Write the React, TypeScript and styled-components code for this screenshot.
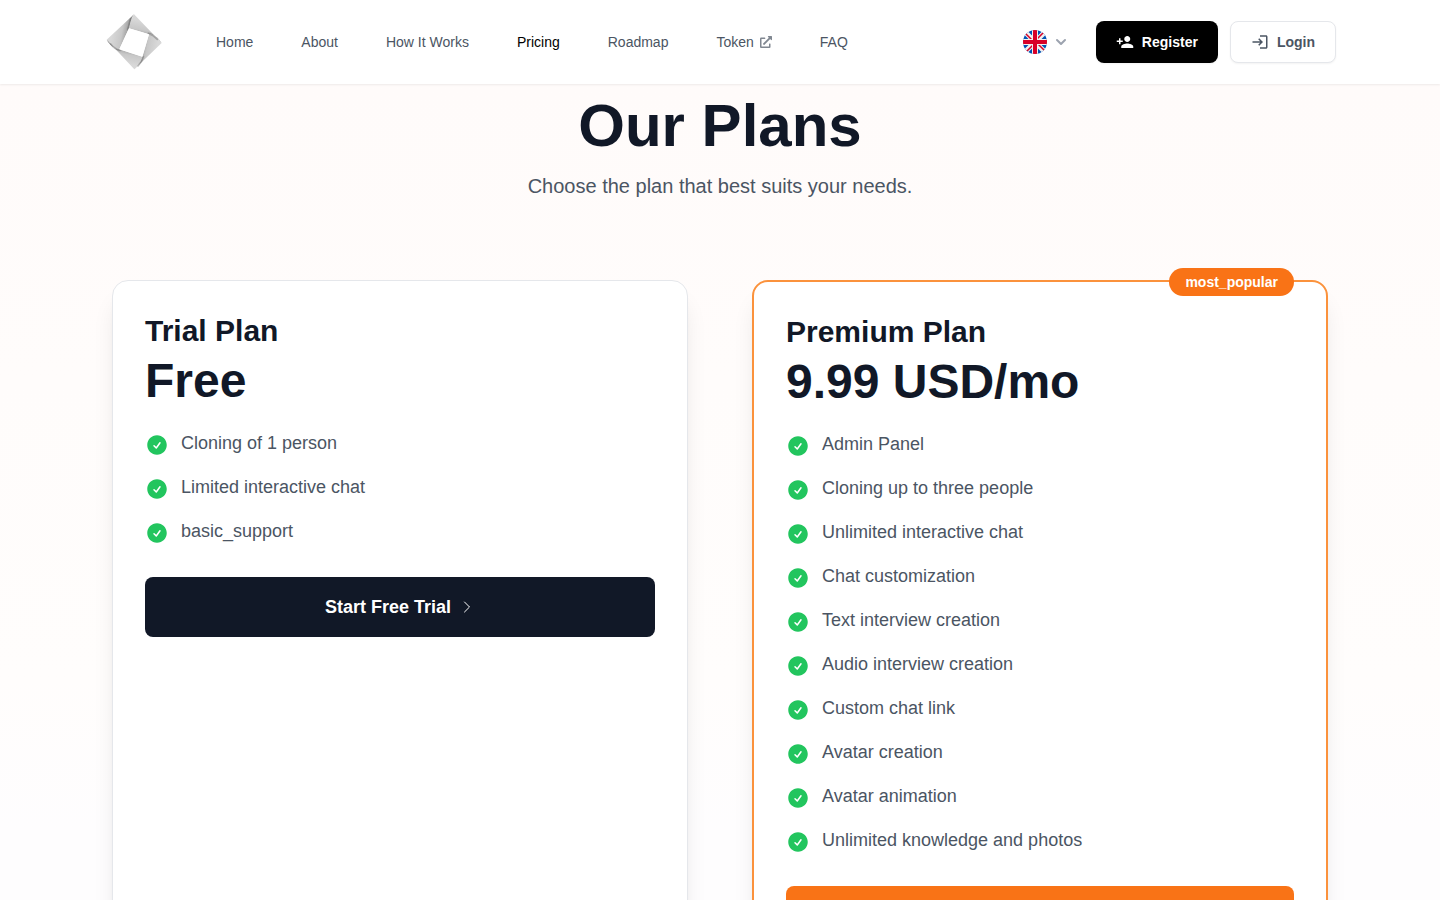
import React from "react";
import styled, { createGlobalStyle, css } from "styled-components";
import { MdLogin, MdPersonAdd } from "react-icons/md";
import { FaExternalLinkAlt } from "react-icons/fa";
import { HiCheckCircle, HiOutlineChevronRight } from "react-icons/hi2";
import { HiChevronDown } from "react-icons/hi";

const GlobalStyle = createGlobalStyle`
  *, *::before, *::after { box-sizing: border-box; }
  body {
    margin: 0;
    font-family: "Liberation Sans", Arial, sans-serif;
    font-size: 16px;
    line-height: 24px;
    color: #111827;
    background: #fff;
  }
  h1, h2, p, ul { margin: 0; padding: 0; }
  ul { list-style: none; }
  a { color: inherit; text-decoration: none; }
  button { font-family: inherit; cursor: pointer; }
  svg { display: block; flex-shrink: 0; }
`;

const Header = styled.header`
  position: sticky;
  top: 0;
  z-index: 10;
  background: #fff;
  box-shadow: 0 1px 2px rgba(0, 0, 0, 0.07);
`;

const HeaderInner = styled.div`
  display: flex;
  align-items: center;
  gap: 48px;
  max-width: 1280px;
  margin: 0 auto;
  padding: 10px 24px;
`;

const NavList = styled.ul`
  display: flex;
  align-items: center;
  gap: 48px;
`;

const NavLink = styled.a<{ $active?: boolean }>`
  display: flex;
  align-items: center;
  gap: 6px;
  font-size: 14px;
  line-height: 20px;
  color: ${(p) => (p.$active ? "#000" : "#4b5563")};
  svg { opacity: 0.7; }
`;

const Actions = styled.div`
  display: flex;
  align-items: center;
  gap: 12px;
  margin-left: auto;
`;

const LanguageButton = styled.button`
  display: flex;
  align-items: center;
  gap: 4px;
  margin-right: 4px;
  padding: 8px 9px;
  border: 0;
  background: transparent;
  color: #9ca3af;
`;

const HeaderButton = styled.button<{ $filled?: boolean }>`
  display: flex;
  align-items: center;
  gap: 8px;
  padding: 10px 20px;
  border: 1px solid #e5e7eb;
  border-radius: 8px;
  background: #fff;
  color: #4b5563;
  font-size: 14px;
  font-weight: 600;
  line-height: 20px;
  box-shadow: 0 1px 2px rgba(0, 0, 0, 0.05);
  ${(p) =>
    p.$filled &&
    css`
      padding: 11px 20px;
      border: 0;
      background: #000;
      color: #fff;
    `}
`;

const Page = styled.main`
  padding: 12px 0 96px;
  background: linear-gradient(to bottom, #fffbfa, #fffdfc 60%, #fefdfe 75%);
`;

const Container = styled.div`
  max-width: 1280px;
  margin: 0 auto;
  padding: 0 32px;
`;

const Intro = styled.div`
  display: flex;
  flex-direction: column;
  gap: 16px;
  margin-bottom: 80px;
  text-align: center;
`;

const Title = styled.h1`
  font-size: 60px;
  font-weight: 700;
  line-height: 60px;
`;

const Subtitle = styled.p`
  font-size: 20px;
  line-height: 28px;
  color: #4b5563;
`;

const Plans = styled.div`
  display: grid;
  grid-template-columns: repeat(2, minmax(0, 1fr));
  gap: 64px;
`;

const Card = styled.section<{ $featured?: boolean }>`
  position: relative;
  padding: 32px;
  border: ${(p) => (p.$featured ? "2px solid #fb923c" : "1px solid #e5e7eb")};
  border-radius: 16px;
  background: #fff;
  box-shadow: 0 20px 25px -5px rgba(0, 0, 0, 0.1), 0 8px 10px -6px rgba(0, 0, 0, 0.1);
`;

const Badge = styled.span`
  position: absolute;
  top: -14px;
  right: 32px;
  padding: 4px 16px;
  border-radius: 14px;
  background: #f97316;
  color: #fff;
  font-size: 14px;
  font-weight: 600;
  line-height: 20px;
`;

const PlanName = styled.h2`
  font-size: 30px;
  font-weight: 700;
  line-height: 36px;
`;

const Price = styled.p`
  margin-top: 8px;
  font-size: 48px;
  font-weight: 700;
  line-height: 48px;
`;

const Features = styled.ul`
  display: flex;
  flex-direction: column;
  gap: 16px;
  margin: 24px 0 32px;
`;

const Feature = styled.li`
  display: flex;
  align-items: flex-end;
  gap: 12px;
  font-size: 18px;
  line-height: 28px;
  color: #4b5563;
  svg { color: #22c55e; }
`;

const PlanButton = styled.button<{ $featured?: boolean }>`
  display: flex;
  align-items: center;
  justify-content: center;
  gap: 8px;
  width: 100%;
  padding: 16px;
  border: 0;
  border-radius: 8px;
  background: ${(p) => (p.$featured ? "#f97316" : "#111827")};
  color: #fff;
  font-size: 18px;
  font-weight: 600;
  line-height: 28px;
`;

/* The four folded bands of the ring, each with the line its shading runs along. */
const bands = [
  {
    id: "north-west",
    d: "M50 119 L132 43 C122 58 122 68 117 85 L88 148 C72 145 62 138 50 119 Z",
    from: [68, 90],
    to: [124, 100],
  },
  {
    id: "north-east",
    d: "M132 43 L215 129 C203 112 193 105 177 103 L117 85 C122 68 122 58 132 43 Z",
    from: [168, 64],
    to: [158, 118],
  },
  {
    id: "south-east",
    d: "M215 129 L133 208 C148 195 152 185 157 170 L177 103 C193 105 203 112 215 129 Z",
    from: [198, 162],
    to: [140, 152],
  },
  {
    id: "south-west",
    d: "M133 208 L50 119 C62 138 72 145 88 148 L157 170 C152 185 148 195 133 208 Z",
    from: [96, 190],
    to: [106, 134],
  },
];

function Logo() {
  return (
    <svg width="64" height="64" viewBox="42 30 192 192" aria-hidden="true">
      {bands.map(({ id, d, from, to }) => (
        <g key={id}>
          <linearGradient
            id={id}
            gradientUnits="userSpaceOnUse"
            x1={from[0]}
            y1={from[1]}
            x2={to[0]}
            y2={to[1]}
          >
            <stop offset="0" stopColor="#d8d8d8" />
            <stop offset="0.5" stopColor="#c8c8c8" />
            <stop offset="0.8" stopColor="#a0a0a0" />
            <stop offset="1" stopColor="#6a6a6a" />
          </linearGradient>
          <path d={d} fill={`url(#${id})`} />
        </g>
      ))}
      <g fill="none" stroke="#505050" strokeWidth="5" strokeLinecap="round" opacity="0.35">
        <path d="M122 56 C118 66 118 74 113 88" />
        <path d="M202 118 C193 108 187 103 175 100" />
        <path d="M144 198 C152 190 156 184 160 170" />
        <path d="M62 132 C70 143 78 148 90 151" />
      </g>
      <path d="M117 85 L177 103 L157 170 L88 148 Z" fill="#fff" />
    </svg>
  );
}

function UkFlag() {
  return (
    <svg width="24" height="24" viewBox="0 0 24 24" aria-hidden="true">
      <clipPath id="disc">
        <circle cx="12" cy="12" r="12" />
      </clipPath>
      <g clipPath="url(#disc)">
        <path fill="#0052b4" d="M0 0h24v24H0z" />
        <path stroke="#f0f0f0" strokeWidth="5" d="M0 0l24 24M24 0L0 24" />
        <path stroke="#d80027" strokeWidth="1.500" d="M0 1l11 11M24 23L13 12M23 0L12 11M1 24l11-11" />
        <path stroke="#f0f0f0" strokeWidth="6" d="M12 0v24M0 12h24" />
        <path stroke="#d80027" strokeWidth="4" d="M12 0v24M0 12h24" />
      </g>
    </svg>
  );
}

const links = [
  { label: "Home" },
  { label: "About" },
  { label: "How It Works" },
  { label: "Pricing", active: true },
  { label: "Roadmap" },
  { label: "Token", external: true },
  { label: "FAQ" },
];

const plans = [
  {
    name: "Trial Plan",
    price: "Free",
    action: "Start Free Trial",
    features: ["Cloning of 1 person", "Limited interactive chat", "basic_support"],
  },
  {
    name: "Premium Plan",
    price: "9.99 USD/mo",
    action: "Get Premium",
    badge: "most_popular",
    features: [
      "Admin Panel",
      "Cloning up to three people",
      "Unlimited interactive chat",
      "Chat customization",
      "Text interview creation",
      "Audio interview creation",
      "Custom chat link",
      "Avatar creation",
      "Avatar animation",
      "Unlimited knowledge and photos",
    ],
  },
];

export default function App() {
  return (
    <>
      <GlobalStyle />
      <Header>
        <HeaderInner>
          <a href="#home" aria-label="Homepage">
            <Logo />
          </a>
          <nav>
            <NavList>
              {links.map((link) => (
                <li key={link.label}>
                  <NavLink href="#" $active={link.active}>
                    {link.label}
                    {link.external && <FaExternalLinkAlt size={12} />}
                  </NavLink>
                </li>
              ))}
            </NavList>
          </nav>
          <Actions>
            <LanguageButton type="button" aria-label="Language">
              <UkFlag />
              <HiChevronDown size={20} />
            </LanguageButton>
            <HeaderButton type="button" $filled>
              <MdPersonAdd size={18} />
              Register
            </HeaderButton>
            <HeaderButton type="button">
              <MdLogin size={18} />
              Login
            </HeaderButton>
          </Actions>
        </HeaderInner>
      </Header>
      <Page>
        <Container>
          <Intro>
            <Title>Our Plans</Title>
            <Subtitle>Choose the plan that best suits your needs.</Subtitle>
          </Intro>
          <Plans>
            {plans.map((plan) => (
              <Card key={plan.name} $featured={!!plan.badge}>
                {plan.badge && <Badge>{plan.badge}</Badge>}
                <PlanName>{plan.name}</PlanName>
                <Price>{plan.price}</Price>
                <Features>
                  {plan.features.map((feature) => (
                    <Feature key={feature}>
                      <HiCheckCircle size={24} />
                      {feature}
                    </Feature>
                  ))}
                </Features>
                <PlanButton type="button" $featured={!!plan.badge}>
                  {plan.action}
                  <HiOutlineChevronRight size={16} />
                </PlanButton>
              </Card>
            ))}
          </Plans>
        </Container>
      </Page>
    </>
  );
}
